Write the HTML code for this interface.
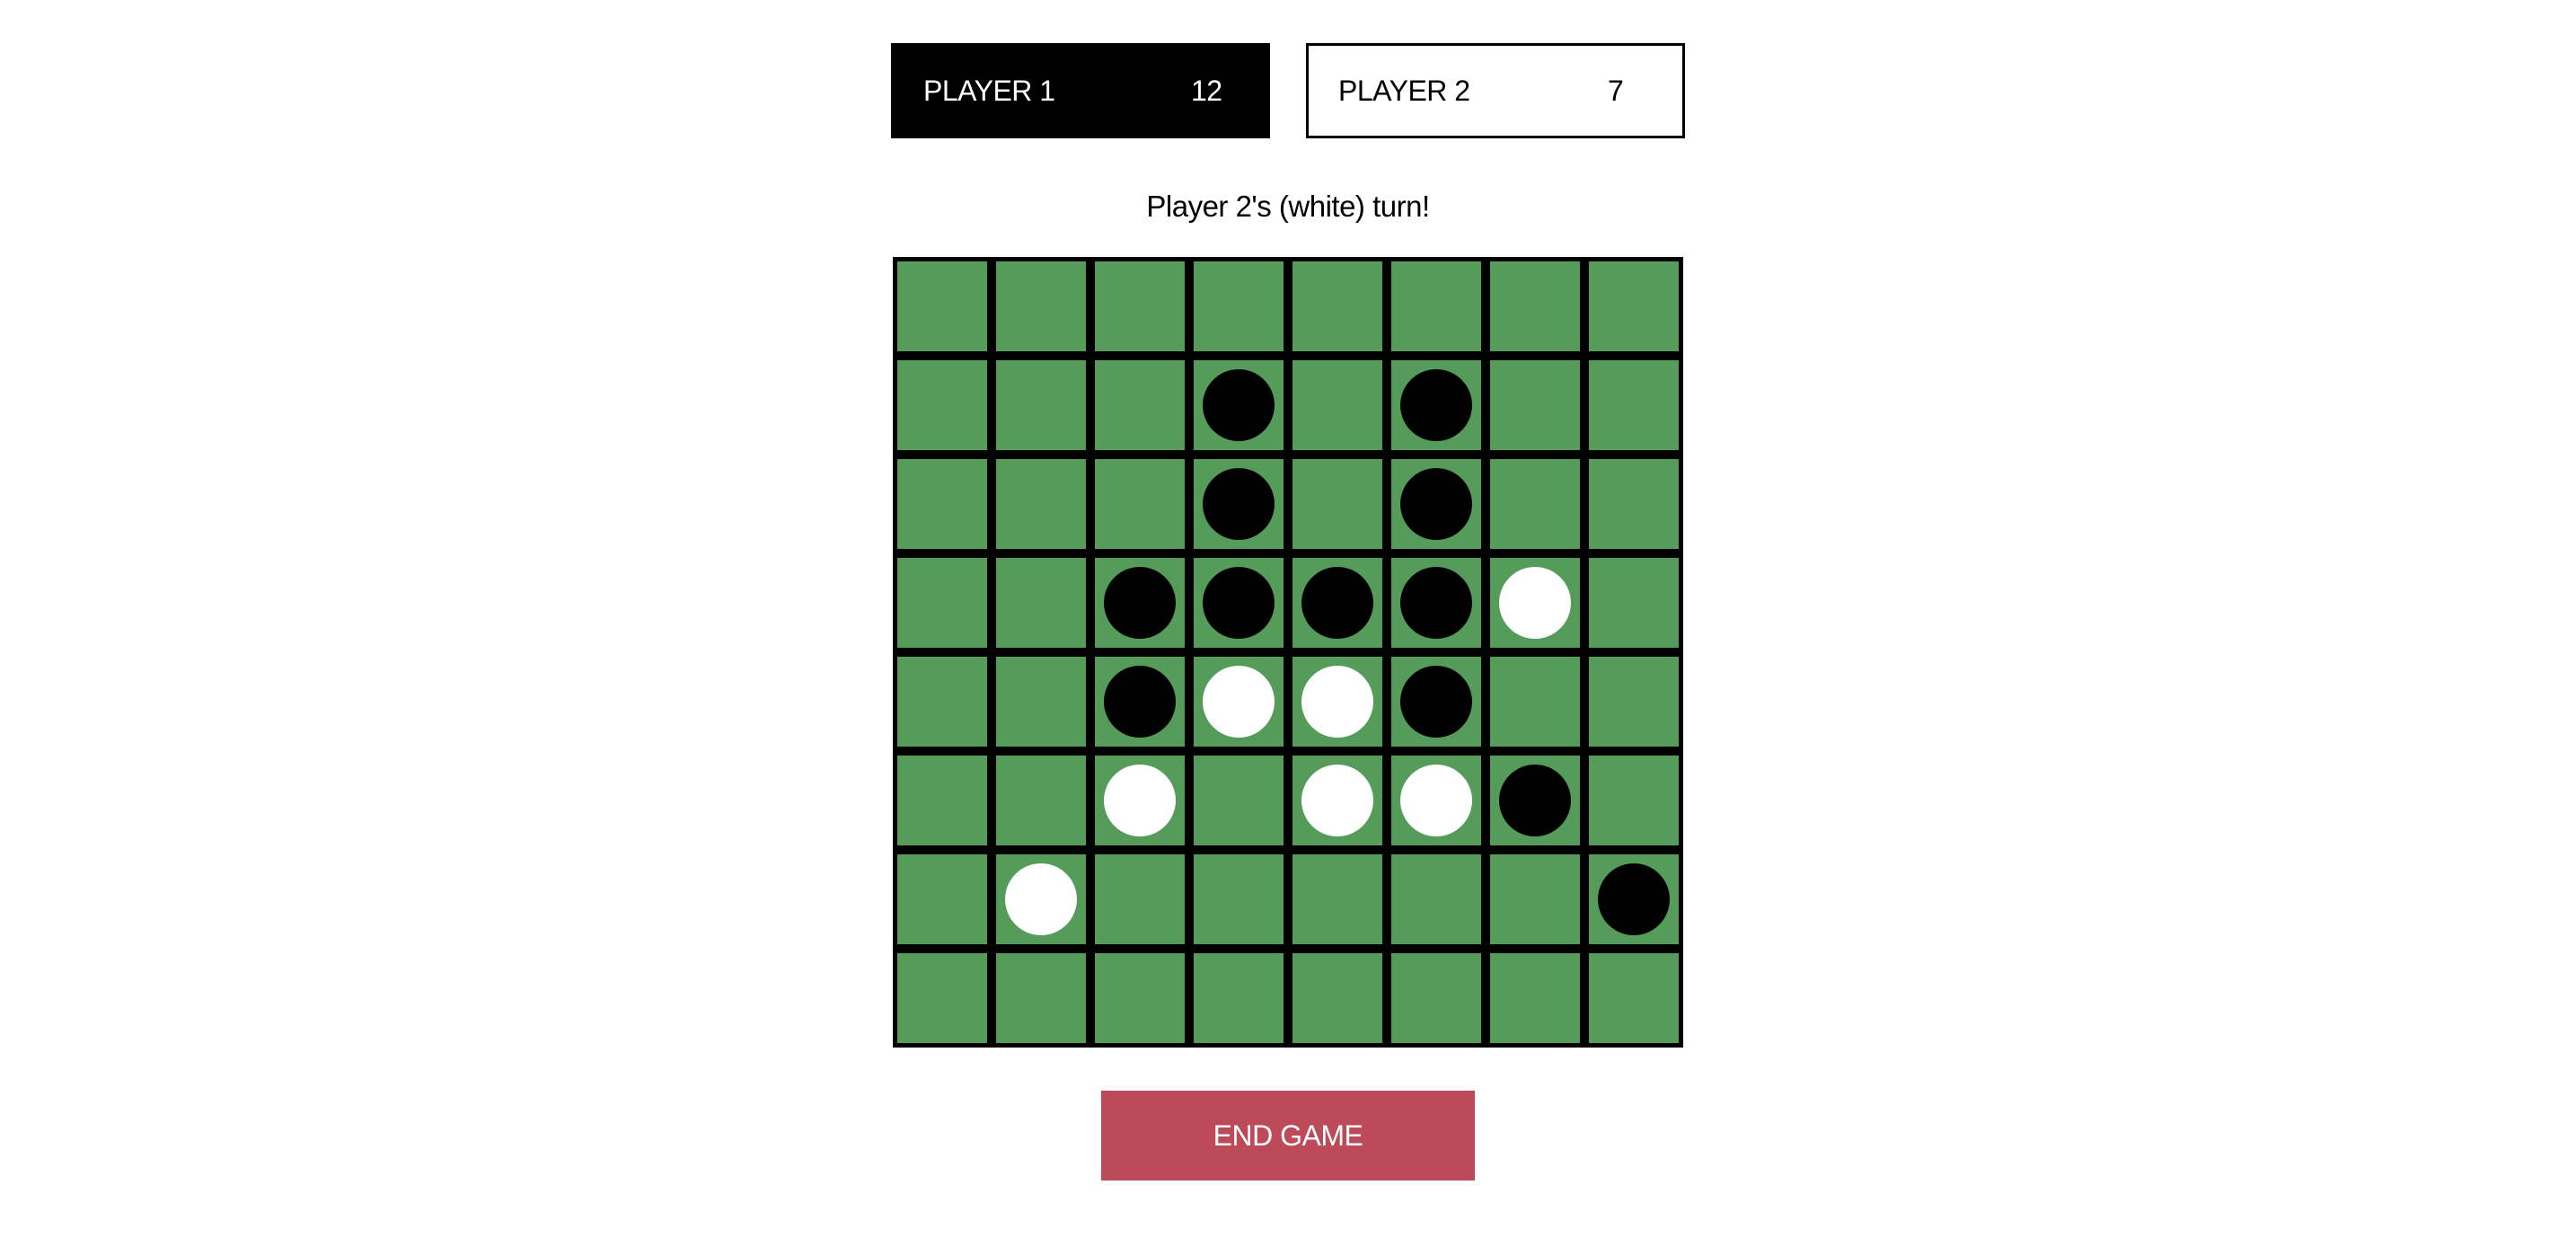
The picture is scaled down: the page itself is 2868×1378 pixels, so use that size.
<!DOCTYPE html>
<html><head><style>
html,body{margin:0;padding:0;background:#fff;width:2868px;height:1378px;overflow:hidden;font-family:"Liberation Sans",sans-serif;}
.box{position:absolute;top:48px;width:422px;height:106px;box-sizing:border-box;}
.lbl{position:absolute;top:30px;font-size:32px;line-height:46px;letter-spacing:-0.5px;}
#board{position:absolute;left:994px;top:286px;width:880px;height:880px;display:grid;grid-template-columns:repeat(8,110px);grid-template-rows:repeat(8,110px);}
.c{box-sizing:border-box;border:5px solid #000;background:#559b59;position:relative;}
.c i{position:absolute;left:10px;top:10px;width:80px;height:80px;border-radius:50%;}
.b{background:#000}.w{background:#fff}
</style></head><body>
<div class="box" style="left:992px;background:#000;color:#fff;">
<span class="lbl" style="left:36px">PLAYER 1</span><span class="lbl" style="left:334px">12</span></div>
<div class="box" style="left:1454px;border:3px solid #000;color:#000;">
<span class="lbl" style="left:33px;top:27px">PLAYER 2</span><span class="lbl" style="left:333px;top:27px">7</span></div>
<div style="position:absolute;left:0;width:2868px;top:208px;text-align:center;font-size:33px;line-height:44px;letter-spacing:-0.5px;">Player 2's (white) turn!</div>
<div id="board">
<div class="c"></div><div class="c"></div><div class="c"></div><div class="c"></div><div class="c"></div><div class="c"></div><div class="c"></div><div class="c"></div>
<div class="c"></div><div class="c"></div><div class="c"></div><div class="c"><i class="b"></i></div><div class="c"></div><div class="c"><i class="b"></i></div><div class="c"></div><div class="c"></div>
<div class="c"></div><div class="c"></div><div class="c"></div><div class="c"><i class="b"></i></div><div class="c"></div><div class="c"><i class="b"></i></div><div class="c"></div><div class="c"></div>
<div class="c"></div><div class="c"></div><div class="c"><i class="b"></i></div><div class="c"><i class="b"></i></div><div class="c"><i class="b"></i></div><div class="c"><i class="b"></i></div><div class="c"><i class="w"></i></div><div class="c"></div>
<div class="c"></div><div class="c"></div><div class="c"><i class="b"></i></div><div class="c"><i class="w"></i></div><div class="c"><i class="w"></i></div><div class="c"><i class="b"></i></div><div class="c"></div><div class="c"></div>
<div class="c"></div><div class="c"></div><div class="c"><i class="w"></i></div><div class="c"></div><div class="c"><i class="w"></i></div><div class="c"><i class="w"></i></div><div class="c"><i class="b"></i></div><div class="c"></div>
<div class="c"></div><div class="c"><i class="w"></i></div><div class="c"></div><div class="c"></div><div class="c"></div><div class="c"></div><div class="c"></div><div class="c"><i class="b"></i></div>
<div class="c"></div><div class="c"></div><div class="c"></div><div class="c"></div><div class="c"></div><div class="c"></div><div class="c"></div><div class="c"></div>
</div>
<div style="position:absolute;left:1226px;top:1214px;width:416px;height:100px;background:#bc4a59;color:#fff;text-align:center;font-size:32px;line-height:100px;letter-spacing:-0.5px;">END GAME</div>
</body></html>
